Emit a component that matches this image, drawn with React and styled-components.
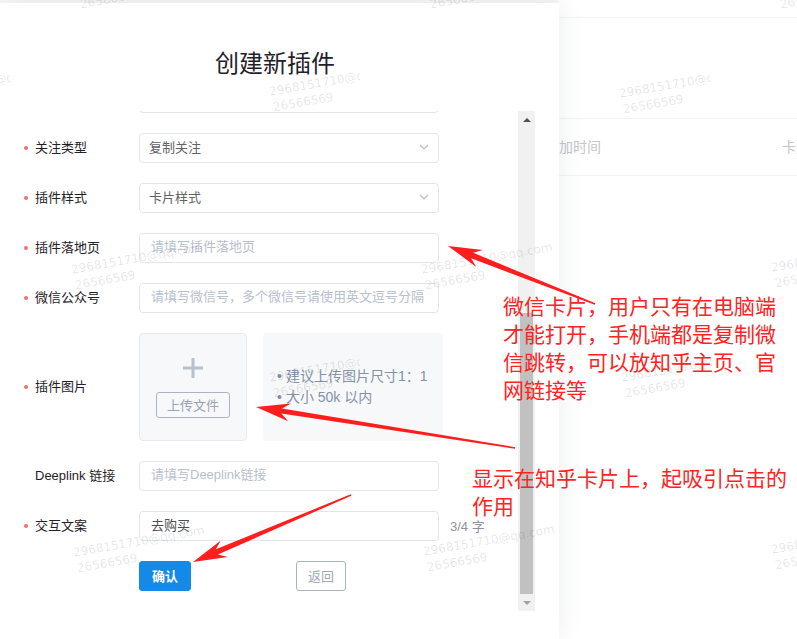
import React from "react";
import styled, { createGlobalStyle } from "styled-components";

const GlobalStyle = createGlobalStyle`
  html, body {
    margin: 0;
    padding: 0;
    background: #fff;
  }
  body {
    font-family: "Liberation Sans", "Noto Sans CJK SC", sans-serif;
  }
  * {
    box-sizing: border-box;
  }
`;

const Page = styled.div`
  position: relative;
  width: 797px;
  height: 639px;
  overflow: hidden;
  background: linear-gradient(#f5f6f8, #f5f6f8) 0 0 / 559px 3px no-repeat, #fff;
`;

/* page behind the drawer */
const TopBar = styled.div`
  height: 18px;
  border-bottom: 1px solid #f2f3f5;
`;

const TableHead = styled.div`
  display: flex;
  align-items: center;
  height: 58px;
  margin-top: 100px;
  padding-left: 545px;
  padding-bottom: 2px;
  border-top: 1px solid #f2f3f5;
  border-bottom: 1px solid #f2f3f5;
  font-family: "Noto Sans CJK SC", sans-serif;
  font-size: 14px;
  color: #c3c6cc;
`;

const HeadCell = styled.div`
  flex: 0 0 ${(p) => p.$w}px;
  white-space: nowrap;
`;

/* drawer */
const Drawer = styled.aside`
  position: absolute;
  left: 0;
  top: 3px;
  bottom: 0;
  width: 559px;
  background: #fff;
  box-shadow: 2px 0 22px rgba(40, 50, 80, 0.08);
  display: flex;
  flex-direction: column;
`;

const DrawerTitle = styled.h2`
  margin: 0;
  height: 108px;
  padding: 42px 9px 0 0;
  text-align: center;
  font: 400 24px/34px "Noto Sans CJK SC", sans-serif;
  color: #1f2329;
`;

const DrawerBody = styled.div`
  display: flex;
  height: 500px;
`;

const FormViewport = styled.div`
  width: 518px;
  overflow: hidden;
`;

const FormInner = styled.div`
  margin-top: -28px;
`;

const Row = styled.div`
  display: flex;
  align-items: center;
  margin-bottom: 20px;
`;

const Label = styled.label`
  flex: 0 0 139px;
  display: flex;
  align-items: center;
  padding-left: 24px;
  padding-bottom: 3px;
  font-size: 13px;
  color: #1f2329;
  white-space: nowrap;

  &::before {
    content: "";
    width: 4px;
    height: 4px;
    margin-right: 7px;
    margin-top: 2px;
    border-radius: 50%;
    background: ${(p) => (p.$required ? "#f56c6c" : "transparent")};
  }
`;

const Field = styled.input`
  width: 300px;
  height: 30px;
  padding: 0 11px 3px;
  border: 1px solid #e1e5ee;
  border-radius: 4px;
  outline: none;
  font-family: "Liberation Sans", "Noto Sans CJK SC", sans-serif;
  font-size: 13px;
  color: #4a4f57;
  background: #fff;

  &::placeholder {
    color: #b7c0ce;
  }
`;

const Select = styled.div`
  width: 300px;
  height: 30px;
  padding: 0 9px 3px;
  border: 1px solid #e1e5ee;
  border-radius: 4px;
  display: flex;
  align-items: center;
  justify-content: space-between;
  font-size: 13px;
  color: #606266;

  svg {
    margin-top: 1px;
  }
`;

const Counter = styled.span`
  margin-left: 11px;
  padding-bottom: 2px;
  font-size: 13px;
  color: #8c939d;
  white-space: nowrap;
`;

const Uploader = styled.div`
  width: 108px;
  height: 108px;
  border: 1px solid #e6e9ef;
  border-radius: 4px;
  background: #f7f8fa;
  display: flex;
  flex-direction: column;
  align-items: center;
  padding-top: 24px;
  gap: 14px;
`;

const UploadButton = styled.button`
  width: 74px;
  height: 26px;
  padding: 0 0 2px;
  border: 1px solid #a9b5c6;
  border-radius: 3px;
  background: transparent;
  font-family: "Noto Sans CJK SC", sans-serif;
  font-size: 13px;
  color: #98a3b4;
`;

const Tips = styled.ul`
  width: 180px;
  height: 108px;
  margin: 0 0 0 16px;
  padding: 0 0 0 14px;
  list-style: none;
  border-radius: 4px;
  background: #f7f8fa;
  display: flex;
  flex-direction: column;
  justify-content: center;
  font-size: 14px;
  line-height: 21px;
  color: #8492a6;

  li::before {
    content: "•";
    margin-right: 4px;
  }
`;

const Actions = styled.div`
  display: flex;
  padding-left: 139px;
`;

const Button = styled.button`
  height: 30px;
  width: ${(p) => (p.$primary ? 52 : 50)}px;
  margin-left: ${(p) => (p.$primary ? 0 : 105)}px;
  padding: 0 0 2px;
  border-radius: 3px;
  border: 1px solid ${(p) => (p.$primary ? "#1589e8" : "#a9b5c6")};
  background: ${(p) => (p.$primary ? "#1589e8" : "#fff")};
  color: ${(p) => (p.$primary ? "#fff" : "#a0a9b8")};
  font-family: "Noto Sans CJK SC", sans-serif;
  font-size: 13px;
  font-weight: ${(p) => (p.$primary ? 700 : 400)};
`;

/* fake native scrollbar */
const ScrollTrack = styled.div`
  width: 17px;
  background: #f1f1f1;
  display: flex;
  flex-direction: column;
`;

const ScrollArrow = styled.div`
  height: 17px;
  display: flex;
  align-items: center;
  justify-content: center;

  &::after {
    content: "";
    border-left: 4px solid transparent;
    border-right: 4px solid transparent;
    ${(p) =>
      p.$down
        ? "border-top: 4px solid #a3a3a3;"
        : "border-bottom: 4px solid #505050;"}
  }
`;

const ThumbLane = styled.div`
  flex: 1;
  display: flex;
  padding: 185px 2px 0;
`;

const Thumb = styled.div`
  flex: 1;
  background: #c1c1c1;
`;

/* overlays: watermark, red annotations */
const Mark = styled.div`
  position: absolute;
  left: ${(p) => p.$x}px;
  top: ${(p) => p.$y}px;
  transform: rotate(-10deg);
  transform-origin: 0 0;
  font: 12px/16px "DejaVu Sans", sans-serif;
  color: rgba(0, 0, 0, 0.11);
  white-space: nowrap;
  pointer-events: none;
`;

const MarkLine = styled.div`
  width: ${(p) => (p.$clip ? `${p.$clip}px` : "auto")};
  overflow: hidden;
  margin-left: ${(p) => (p.$second ? 1 : 0)}px;
`;

const Arrows = styled.svg`
  position: absolute;
  left: 0;
  top: 0;
  pointer-events: none;
`;

const Note = styled.p`
  position: absolute;
  left: ${(p) => p.$x}px;
  top: ${(p) => p.$y}px;
  width: ${(p) => p.$w}px;
  margin: 0;
  font: 400 21px/28px "Noto Sans CJK SC", sans-serif;
  color: #ff2323;
`;

const marks = [
  { x: 75, y: -19 },
  { x: 425, y: -19 },
  { x: 775, y: -19 },
  { x: -82, y: 86, clip: 92 },
  { x: 268, y: 84, clip: 92 },
  { x: 618, y: 86, clip: 92 },
  { x: 70, y: 262 },
  { x: 420, y: 262 },
  { x: 770, y: 260 },
  { x: 268, y: 370, clip: 92 },
  { x: 620, y: 370, clip: 92 },
  { x: 72, y: 545 },
  { x: 422, y: 544 },
  { x: 770, y: 542 },
];

const arrows = [
  { tail: [595, 304], tip: [448, 246], w1: 3 },
  { tail: [515, 448], tip: [256, 407], w1: 2.6 },
  { tail: [351, 495], tip: [193, 562], w1: 2.8 },
];

function arrowPoints(tail, tip, w1) {
  const dx = tip[0] - tail[0];
  const dy = tip[1] - tail[1];
  const len = Math.hypot(dx, dy);
  const ux = dx / len;
  const uy = dy / len;
  const nx = -uy;
  const ny = ux;
  const at = (base, along, side) => [
    base[0] + ux * along + nx * side,
    base[1] + uy * along + ny * side,
  ];
  const pts = [
    at(tail, 0, 0.8),
    at(tip, -26, w1),
    at(tip, -34, 9),
    tip,
    at(tip, -34, -9),
    at(tip, -26, -w1),
    at(tail, 0, -0.8),
  ];
  return pts.map((q) => q.map((v) => v.toFixed(1)).join(",")).join(" ");
}

function Chevron() {
  return (
    <svg width="10" height="6" viewBox="0 0 10 6">
      <polyline points="1,1 5,5 9,1" fill="none" stroke="#b4bccc" strokeWidth="1.2" />
    </svg>
  );
}

function Plus() {
  return (
    <svg width="20" height="20" viewBox="0 0 20 20">
      <rect x="8.5" y="0" width="3" height="20" fill="#b6c0ce" />
      <rect x="0" y="8.5" width="20" height="3" fill="#b6c0ce" />
    </svg>
  );
}

export default function App() {
  return (
    <>
      <GlobalStyle />
      <Page>
        <TopBar />
        <TableHead>
          <HeadCell $w={237}>添加时间</HeadCell>
          <HeadCell $w={60}>卡片样式</HeadCell>
        </TableHead>

        <Drawer>
          <DrawerTitle>创建新插件</DrawerTitle>
          <DrawerBody>
            <FormViewport>
              <FormInner>
                <Row>
                  <Label $required>插件名称</Label>
                  <Field placeholder="请填写插件名称" readOnly />
                </Row>
                <Row>
                  <Label $required>关注类型</Label>
                  <Select>
                    复制关注
                    <Chevron />
                  </Select>
                </Row>
                <Row>
                  <Label $required>插件样式</Label>
                  <Select>
                    卡片样式
                    <Chevron />
                  </Select>
                </Row>
                <Row>
                  <Label $required>插件落地页</Label>
                  <Field placeholder="请填写插件落地页" readOnly />
                </Row>
                <Row>
                  <Label $required>微信公众号</Label>
                  <Field placeholder="请填写微信号，多个微信号请使用英文逗号分隔" readOnly />
                </Row>
                <Row>
                  <Label $required>插件图片</Label>
                  <Uploader>
                    <Plus />
                    <UploadButton>上传文件</UploadButton>
                  </Uploader>
                  <Tips>
                    <li>建议上传图片尺寸1：1</li>
                    <li>大小 50k 以内</li>
                  </Tips>
                </Row>
                <Row>
                  <Label>Deeplink 链接</Label>
                  <Field placeholder="请填写Deeplink链接" readOnly />
                </Row>
                <Row>
                  <Label $required>交互文案</Label>
                  <Field defaultValue="去购买" readOnly />
                  <Counter>3/4 字</Counter>
                </Row>
                <Actions>
                  <Button $primary>确认</Button>
                  <Button>返回</Button>
                </Actions>
              </FormInner>
            </FormViewport>
            <ScrollTrack>
              <ScrollArrow />
              <ThumbLane>
                <Thumb />
              </ThumbLane>
              <ScrollArrow $down />
            </ScrollTrack>
          </DrawerBody>
        </Drawer>

        {marks.map((m, i) => (
          <Mark key={i} $x={m.x} $y={m.y}>
            <MarkLine $clip={m.clip}>2968151710@qq.com</MarkLine>
            <MarkLine $second>26566569</MarkLine>
          </Mark>
        ))}

        <Arrows width="797" height="639" viewBox="0 0 797 639">
          {arrows.map((a, i) => (
            <polygon key={i} points={arrowPoints(a.tail, a.tip, a.w1)} fill="#ff1e1e" />
          ))}
        </Arrows>

        <Note $x={503} $y={291} $w={280}>
          微信卡片，用户只有在电脑端才能打开，手机端都是复制微信跳转，可以放知乎主页、官网链接等
        </Note>
        <Note $x={472} $y={463} $w={320}>
          显示在知乎卡片上，起吸引点击的作用
        </Note>
      </Page>
    </>
  );
}
